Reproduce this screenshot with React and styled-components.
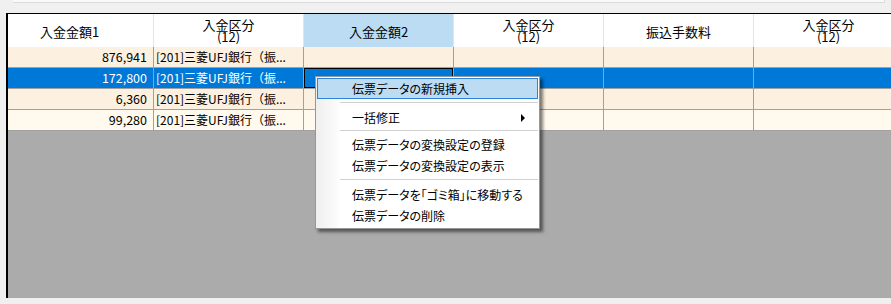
import React from "react";
import styled, { createGlobalStyle } from "styled-components";

const GlobalStyle = createGlobalStyle`
  body {
    margin: 0;
    background: #f0f0f0;
    font-family: "Noto Sans CJK JP", "Noto Sans", sans-serif;
    font-size: 12px;
    color: #000;
  }
`;

const Page = styled.div`
  position: relative;
  width: 891px;
  height: 304px;
  overflow: hidden;
  background: #f0f0f0;
`;

const TopStrip = styled.div`
  margin-left: 13px;
  width: 871px;
  height: 2px;
  background: #f9f9f9;
  border-right: 1px solid #dcdcdc;
  border-bottom: 1px solid #dcdcdc;
`;

const Grid = styled.div`
  margin-top: 10px;
  margin-left: 6px;
  height: 284px;
  border-left: 2px solid #000;
  border-top: 1px solid #000;
  background: #ababab;
  overflow: hidden;
`;

const Row = styled.div`
  display: flex;
  width: 1000px;
  height: ${(p) => (p.$head ? "33px" : "21px")};
  background: ${(p) => p.$bg};
  color: ${(p) => (p.$selected ? "#fff" : "#000")};
`;

const Cell = styled.div`
  position: relative;
  box-sizing: border-box;
  flex: 0 0 ${(p) => p.$w}px;
  display: flex;
  align-items: center;
  justify-content: ${(p) => (p.$align === "right" ? "flex-end" : "flex-start")};
  padding: 0 ${(p) => (p.$align === "right" ? "6px" : "2px")};
  border-right: 1px solid #a0a0a0;
  border-bottom: 1px solid #a0a0a0;
  white-space: nowrap;
  overflow: hidden;
  line-height: 1;
  font-size: ${(p) => (p.$align === "right" ? "12.5px" : "12px")};
`;

const Focus = styled.div`
  position: absolute;
  left: 0;
  top: 0;
  right: 0;
  bottom: 0;
  border: 1px solid #000;
`;

const HeadCell = styled.div`
  box-sizing: border-box;
  flex: 0 0 ${(p) => p.$w}px;
  display: flex;
  flex-direction: column;
  align-items: center;
  justify-content: center;
  background: ${(p) => (p.$active ? "#bcdcf4" : "#fff")};
  border-right: 1px solid #e5e5e5;
  line-height: 12px;
  font-size: 13px;
  padding-right: ${(p) => p.$shift || 0}px;
  padding-top: ${(p) => (p.$two ? "0" : "3px")};
`;

const Menu = styled.div`
  position: absolute;
  left: 315px;
  top: 76px;
  width: 225px;
  box-sizing: border-box;
  padding: 1px 1px 2px;
  background: linear-gradient(to right, #efefef 0, #fafafa 20px, #fff 24px);
  border: 1px solid #979797;
  box-shadow: 3px 3px 3px rgba(0, 0, 0, 0.5);
  font-feature-settings: "palt";
`;

const Item = styled.div`
  position: relative;
  box-sizing: border-box;
  height: 21px;
  display: flex;
  align-items: center;
  padding-left: 34px;
  border: 1px solid ${(p) => (p.$hot ? "#2d84d8" : "transparent")};
  background: ${(p) => (p.$hot ? "#bcdcf4" : "transparent")};
  white-space: nowrap;
`;

const Arrow = styled.span`
  position: absolute;
  right: 12px;
  top: 6px;
  width: 0;
  height: 0;
  border-top: 4px solid transparent;
  border-bottom: 4px solid transparent;
  border-left: 4px solid #000;
`;

const Sep = styled.div`
  height: ${(p) => p.$h}px;
  display: flex;
  align-items: center;
  padding-left: 23px;
  &::after {
    content: "";
    flex: 1;
    height: 1px;
    background: #d0d0d0;
    border-bottom: 1px solid #fff;
  }
`;

const widths = [146, 150, 150, 150, 150, 150, 100];

const heads = [
  ["入金金額1"],
  ["入金区分", "(12)"],
  ["入金金額2"],
  ["入金区分", "(12)"],
  ["振込手数料"],
  ["入金区分", "(12)"],
  [""],
];

const rows = [
  { amount: "876,941", bg: "#fcf1e0" },
  { amount: "172,800", bg: "#0078d7", selected: true },
  { amount: "6,360", bg: "#fcf1e0" },
  { amount: "99,280", bg: "#fffaed" },
];

const bank = "[201]三菱UFJ銀行（振...";

const menu = [
  { label: "伝票データの新規挿入", hot: true },
  { sep: 8 },
  { label: "一括修正", sub: true },
  { sep: 6 },
  { label: "伝票データの変換設定の登録" },
  { label: "伝票データの変換設定の表示" },
  { sep: 8 },
  { label: "伝票データを「ゴミ箱」に移動する" },
  { label: "伝票データの削除" },
];

export default function App() {
  return (
    <Page>
      <GlobalStyle />
      <TopStrip />
      <Grid>
        <Row $head $bg="#fff">
          {heads.map((h, i) => (
            <HeadCell
              key={i}
              $w={widths[i]}
              $active={i === 2}
              $two={h.length > 1}
              $shift={i === 0 ? 22 : 0}
            >
              {h.map((t, j) => (
                <span key={j}>{t}</span>
              ))}
            </HeadCell>
          ))}
        </Row>
        {rows.map((r, i) => (
          <Row key={i} $bg={r.bg} $selected={r.selected}>
            <Cell $w={widths[0]} $align="right">{r.amount}</Cell>
            <Cell $w={widths[1]}>{bank}</Cell>
            <Cell $w={widths[2]}>{r.selected && <Focus />}</Cell>
            <Cell $w={widths[3]} />
            <Cell $w={widths[4]} />
            <Cell $w={widths[5]} />
            <Cell $w={widths[6]} />
          </Row>
        ))}
      </Grid>
      <Menu>
        {menu.map((m, i) =>
          m.sep ? (
            <Sep key={i} $h={m.sep} />
          ) : (
            <Item key={i} $hot={m.hot}>
              {m.label}
              {m.sub && <Arrow />}
            </Item>
          )
        )}
      </Menu>
    </Page>
  );
}
